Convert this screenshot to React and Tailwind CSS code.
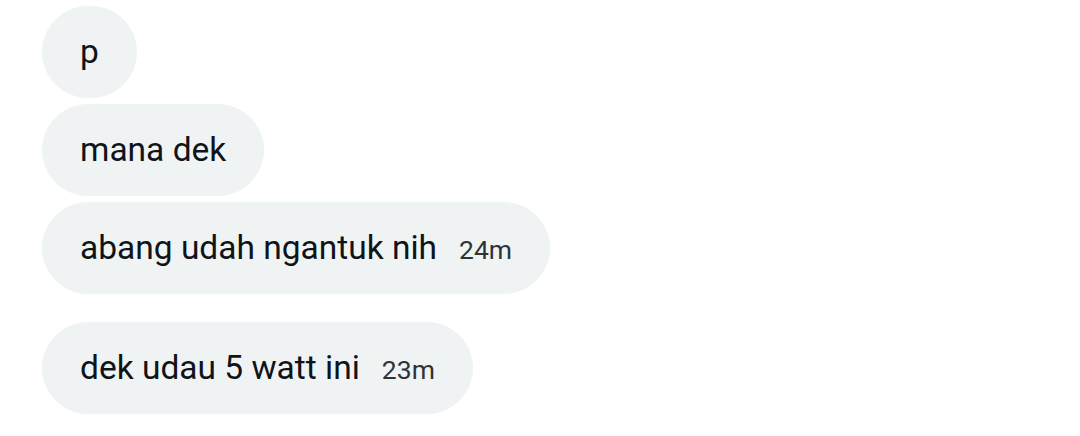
import React from "react";

const messages = [
  { text: "p" },
  { text: "mana dek" },
  { text: "abang udah ngantuk nih", time: "24m" },
  { text: "dek udau 5 watt ini", time: "23m", gapBefore: true },
];

const Bubble = ({ text, time, gapBefore }) => {
  return (
    <div
      className={`flex items-baseline h-[92px] pt-[28px] px-[38px] rounded-full bg-[#eff3f4] ${
        gapBefore ? "mt-[22px]" : ""
      }`}
    >
      <span className="text-[33.5px] leading-[36px] text-[#0f1419]">{text}</span>
      {time && (
        <span className="ml-[22px] text-[26.5px] leading-[36px] text-[#2f3336]">{time}</span>
      )}
    </div>
  );
};

const App = () => {
  return (
    <div
      className="w-[1080px] h-[436px] bg-white flex flex-col items-start gap-[6px] pl-[42px] pt-[6px]"
      style={{ fontFamily: "Roboto, 'Liberation Sans', sans-serif" }}
    >
      {messages.map((m, i) => (
        <Bubble key={i} {...m} />
      ))}
    </div>
  );
};

export default App;
